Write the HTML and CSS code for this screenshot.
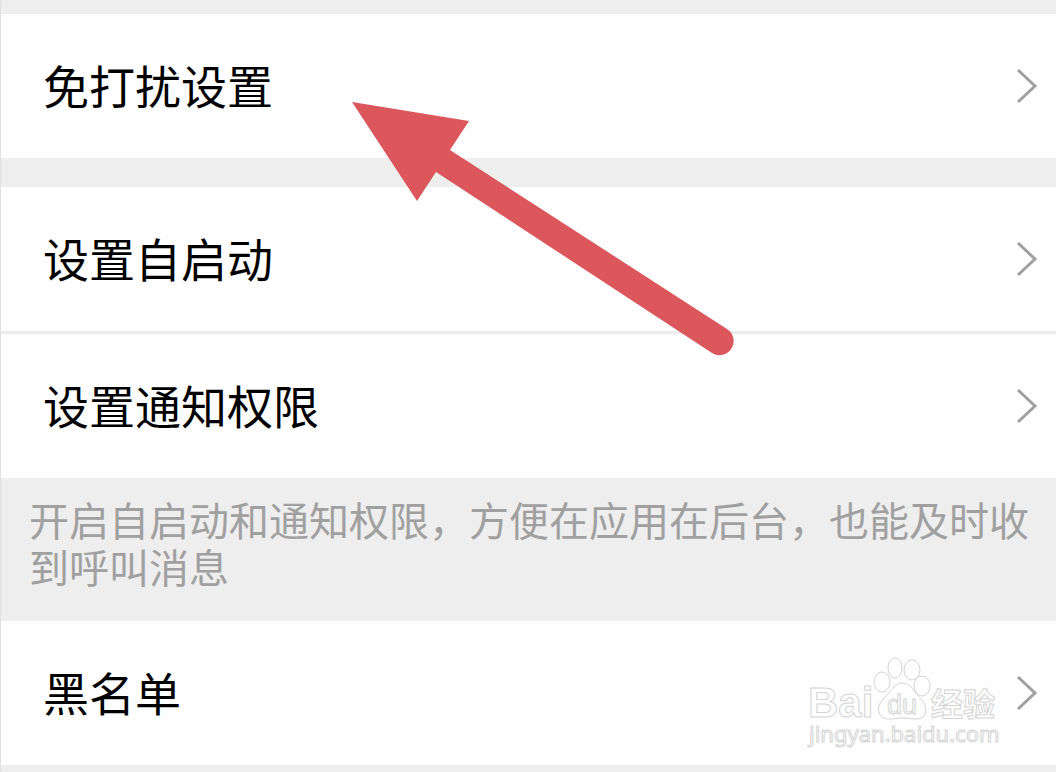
FILE: index.html
```html
<!DOCTYPE html>
<html lang="zh-CN">
<head>
    <meta charset="UTF-8">
    <meta name="viewport" content="width=device-width, initial-scale=1.0">
    <title>设置</title>
    <link rel="stylesheet" href="styles.css">
</head>
<body>

    <main class="settings">
        <section class="group">
            <a href="#dnd" class="row">
                <span class="label">免打扰设置</span>
                <svg class="chevron" viewBox="0 0 22 36"><path d="M2 2 L19 18 L2 34"/></svg>
            </a>
        </section>

        <section class="group">
            <a href="#autostart" class="row">
                <span class="label">设置自启动</span>
                <svg class="chevron" viewBox="0 0 22 36"><path d="M2 2 L19 18 L2 34"/></svg>
            </a>
            <a href="#notify" class="row">
                <span class="label">设置通知权限</span>
                <svg class="chevron" viewBox="0 0 22 36"><path d="M2 2 L19 18 L2 34"/></svg>
            </a>
        </section>

        <p class="note">开启自启动和通知权限，方便在应用在后台，也能及时收到呼叫消息</p>

        <section class="group">
            <a href="#blacklist" class="row">
                <span class="label">黑名单</span>
                <svg class="chevron" viewBox="0 0 22 36"><path d="M2 2 L19 18 L2 34"/></svg>
            </a>
        </section>
    </main>

    <!-- arrow pointing at the first row -->
    <svg class="arrow" viewBox="0 0 384 256">
        <path d="M1 1 L118 20 L99 49 L376 228 A14 14 0 0 1 361 252 L85 71 L66 100 Z"/>
    </svg>

    <!-- watermark -->
    <svg class="watermark" viewBox="0 0 200 100">
        <text class="brand" x="2" y="63">Bai</text>
        <ellipse cx="76" cy="28" rx="8" ry="10"/>
        <ellipse cx="89" cy="14" rx="7" ry="10"/>
        <ellipse cx="106" cy="16" rx="8" ry="10"/>
        <ellipse cx="116" cy="32" rx="8" ry="10"/>
        <path d="M96 29 C105 29 108 38 114 44 C120 50 122 58 117 63 C112 67 104 64 96 64 C88 64 81 67 76 63 C70 58 72 50 78 44 C85 38 88 29 96 29 Z"/>
        <text class="du" x="81" y="60">du</text>
        <text class="cjk" x="125" y="62">经验</text>
        <text class="site" x="3" y="88">jingyan.baidu.com</text>
    </svg>

</body>
</html>
```
FILE: styles.css
```css
* {
    box-sizing: border-box;
}
body {
    margin: 0;
    min-height: 100vh;
    background-color: #eeeeee;
    font-family: "Noto Sans CJK SC", sans-serif;
    position: relative;
    overflow: hidden;
}
.settings {
    min-height: 100vh;
    padding-top: 14px;
    border-left: 1px solid #e0e0e0;
}
.group {
    background-color: #fefefe;
}
.group + .group {
    margin-top: 29px;
}
.row {
    display: flex;
    align-items: center;
    justify-content: space-between;
    height: 144px;
    padding: 0 18px 0 42px;
    color: #000000;
    font-size: 46px;
    line-height: 64px;
    text-decoration: none;
}
.row + .row {
    height: 147px;
    border-top: 3px solid #ececec;
}
.label {
    padding-bottom: 4px;
}
.chevron {
    width: 22px;
    height: 36px;
    fill: none;
    stroke: #a0a0a0;
    stroke-width: 3;
}
.note {
    margin: 0;
    padding: 18px 20px 31px 28px;
    color: #a0a0a0;
    font-size: 40px;
    line-height: 47px;
}
.arrow {
    position: absolute;
    left: 351px;
    top: 101px;
    width: 384px;
    height: 256px;
    fill: #dc575c;
}
.watermark {
    position: absolute;
    right: 50px;
    bottom: 18px;
    width: 200px;
    height: 100px;
    fill: #fefefe;
    stroke: #d4d4d4;
    stroke-width: 1;
}
.brand {
    font-family: "Liberation Sans", sans-serif;
    font-size: 42px;
    font-weight: bold;
}
.du {
    font-family: "Liberation Sans", sans-serif;
    font-size: 27px;
}
.cjk {
    font-size: 32px;
    font-weight: bold;
}
.site {
    font-family: "Noto Sans", sans-serif;
    font-size: 22px;
}
```
